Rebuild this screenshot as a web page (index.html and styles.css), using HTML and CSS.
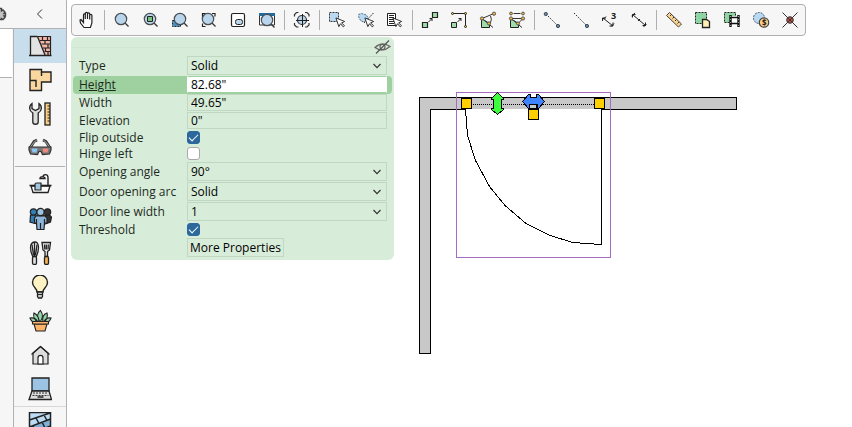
FILE: index.html
```html
<!DOCTYPE html>
<html lang="en">
<head>
<meta charset="utf-8">
<title>Floor plan editor</title>
<link rel="stylesheet" href="styles.css">
</head>
<body>
<svg class="defs" aria-hidden="true">
  <symbol id="lens" viewBox="0 0 21 20"><path d="M12.5 12.5l4 4" stroke="#333" stroke-width="1.300"/><circle cx="9" cy="9" r="5.700" fill="#b9d5ec" stroke="#4a4e52" stroke-width="1.200"/></symbol>
  <symbol id="cursor" viewBox="0 0 12 12"><path d="M1 1l3.2 9.5 1.8-3.2 3 3.5 1.4-1.3-3.2-3 3.3-1.6z" fill="#fff" stroke="#222" stroke-width="1"/></symbol>
  <symbol id="chev" viewBox="0 0 10 6"><path d="M1.5 1l3.5 3.6L8.500 1" fill="none" stroke="#333" stroke-width="1.2"/></symbol>
</svg>
<div class="app">
  <aside class="side">
    <header class="side-head">
      <svg class="gear" width="8" height="16" viewBox="0 0 8 16"><path d="M-2 2.500h3.500v2.500l1.500-1 2 2-1 1.500h1.500v2.500h-1.500l1 1.500-2 2-1.500-1v1h-3.500z" fill="#c4c4c4" stroke="#444" stroke-width="1.400"/></svg>
      <button class="collapse" aria-label="Collapse"><svg width="8" height="12" viewBox="0 0 8 12"><path d="M6 1.500L1.500 6 6 10.500" fill="none" stroke="#333"/></svg></button>
    </header>
    <div class="side-body">
      <div class="gutter"><div class="list"></div></div>
      <nav class="cats">
        <button class="cat on" aria-label="Walls"><svg viewBox="0 0 24 24"><path d="M2 2h8l7 19H2z" fill="#e3e3e3"/><path d="M10 2h13v19h-6z" fill="#f3b4a6"/><path d="M9.500 2.500h13v18.500M12 6.500h11M13.500 10h9M15 14h8M16.500 17.500h6M14.500 3v3.500M19.500 3v3.500M17 6.500V10M20 10v4M17.500 14v3.500M20 17.500V21" fill="none" stroke="#222" stroke-width="1.200"/><path d="M9.500 2.500L17 21" stroke="#222" stroke-width="1.300"/><path d="M2.500 21V2.500h7M1 21.500h22.500" fill="none" stroke="#222" stroke-width="1.300"/></svg></button>
        <button class="cat" aria-label="Rooms"><svg viewBox="0 0 24 24"><path d="M2 1.500h11.500v2.500H23v10h-9.500v8.500H2z" fill="#fbd7a0" stroke="#222" stroke-width="1.400"/><path d="M2 12.500h6v6.500M13.500 4v4" fill="none" stroke="#222" stroke-width="1.400"/></svg></button>
        <button class="cat" aria-label="Tools"><svg viewBox="0 0 24 24"><path d="M4 1.500v5l3.500 2 3.500-2v-5c3.500 2.500 3 7.500-.8 9.500v9c0 3-5.400 3-5.400 0v-9C1 9 .5 4 4 1.500z" fill="#ddd" stroke="#222" stroke-width="1.300"/><rect x="17" y="1" width="5" height="22" fill="#fbd083" stroke="#222" stroke-width="1.300"/><path d="M19.500 4H22M19.500 7H22M19.500 10H22M19.500 13H22M19.500 16H22M19.500 19H22" stroke="#222"/></svg></button>
        <button class="cat" aria-label="3D view"><svg viewBox="0 0 24 24"><path d="M2 12L6 5.500l3-1.500M22 12l-4-6.500L15 4" fill="none" stroke="#333" stroke-width="2.800"/><path d="M2.500 11L6.500 5.500l2-1M21.500 11l-4-5.500-2-1" fill="none" stroke="#aaa"/><path d="M1 11h22v3l-1.500 4-7 .5-1.500-3h-2l-1.500 3-7-.5L1 14z" fill="#777" stroke="#333" stroke-width="1.200"/><path d="M3.500 12.500h6l-1 4h-4z" fill="#8fc5f2"/><path d="M14.500 12.500h6l-1 4h-4z" fill="#f08b80"/></svg></button>
        <hr class="rule">
        <button class="cat" aria-label="Bathroom"><svg viewBox="0 0 24 24"><path d="M20 12V4.500c0-4-5-3.500-5-.5M12 5.500c0-2.500 5-2.500 5 0z" fill="none" stroke="#222" stroke-width="1.400"/><path d="M3 13h19l-2 6.500H5z" fill="#fff" stroke="#222" stroke-width="1.300"/><path d="M1.500 12.500h22" stroke="#222" stroke-width="1.600"/><path d="M7 17v-5.500q0-1.500 1.500-1.500H13v7z" fill="#9fc8e0" stroke="#222" stroke-width="1.200"/></svg></button>
        <button class="cat" aria-label="People"><svg viewBox="0 0 24 24"><g stroke="#222" stroke-width="1.200"><path d="M2.500 8H10v9l-5-1-3-1z" fill="#2f7fb5"/><path d="M14 8h7.500l2 2-1 5-5 2H14z" fill="#333"/><circle cx="5.500" cy="5" r="3.200" fill="#2f7fb5"/><circle cx="19.500" cy="5" r="3.200" fill="#333"/><path d="M8 9h9l2 2v5h-2.500l-.5 6.500H9L8.500 16H6.500v-5z" fill="#8db5da"/><path d="M12.500 16v6M8.500 12v4M16.500 12v4"/><circle cx="12.500" cy="5" r="3.600" fill="#9cc3e4"/></g></svg></button>
        <button class="cat" aria-label="Kitchen"><svg viewBox="0 0 24 24"><g stroke="#222" stroke-width="1.300"><path d="M5 16C1.500 9 1.500 1.500 6.500 1S11.500 9 8 16z" fill="#eee"/><path d="M6.500 1v14M4 3.500l1.500 11M9 3.500l-1.500 11" fill="none"/><rect x="4.500" y="15.500" width="4" height="8" rx="1.500" fill="#ddd"/><path d="M14 1.500h8.500L21.500 9l-2 1.500v5h-2.500v-5L15 9z" fill="#eee"/><path d="M16.500 3.500l.3 5M18.300 3.500v5M20.300 3.500l-.3 5"/><rect x="16.500" y="15.500" width="4" height="8" rx="1.500" fill="#f9b150"/></g></svg></button>
        <button class="cat" aria-label="Lighting"><svg viewBox="0 0 24 24"><path d="M9 17c0-4-4.500-4.500-4.500-9.500a7.500 7.500 0 0 1 15 0c0 5-4.500 5.500-4.500 9.500z" fill="#fdf3c2" stroke="#222" stroke-width="1.400"/><path d="M9.500 17h5v4.500l-1 1.500h-3l-1-1.500z" fill="#ccc" stroke="#222" stroke-width="1.300"/><path d="M9 19.500h6" stroke="#222"/></svg></button>
        <button class="cat" aria-label="Plants"><svg viewBox="0 0 24 24"><g fill="#94d6ab" stroke="#222" stroke-width="1.100"><path d="M12 13C8 9 9 4 12.500 1.500 15 5 15.500 9 12 13z"/><path d="M10 13C6 11 5 7 6 4c3 1.500 5 4 5 9zM15 13c-1-5 1-8 4-9 1 3 0 7-3 9zM9 13c-4 1-6-1-7-4 3-.5 6 .5 8 4zM16 13c1-3 4-4.500 7-4-1 3-3.500 5-7 4z"/><path d="M6 15h13l-2 7H8z" fill="#fdb468"/><path d="M4.500 12.500h16V15h-16z" fill="#fdb468"/></g></svg></button>
        <button class="cat" aria-label="Exterior"><svg viewBox="0 0 24 24"><path d="M5 10v11h15V10l-7.500-6.500z" fill="#ddd" stroke="#222" stroke-width="1.200"/><path d="M3.500 11.500l9-8 9 8" fill="none" stroke="#222" stroke-width="1.200"/><path d="M10 21v-6c0-3.500 5-3.500 5 0v6z" fill="#fff" stroke="#222" stroke-width="1.200"/></svg></button>
        <button class="cat" aria-label="Electronics"><svg viewBox="0 0 24 24"><path d="M4 1h17v13H4z" fill="#9cc3e4" stroke="#222" stroke-width="1.300"/><path d="M4 14h17l2.500 8.500H1z" fill="#ddd" stroke="#222" stroke-width="1.300"/><path d="M5 16h15M4.500 18.500h16" stroke="#333" stroke-dasharray="2 1"/><path d="M9.500 20h6" stroke="#222" stroke-width="1.500"/></svg></button>
        <hr class="thin">
        <button class="cat" aria-label="Materials"><svg viewBox="0 0 24 24"><path d="M1.500 0h21v24h-21z" fill="#bcdcf3"/><path d="M1.500 15l21-8v7l-21 8z" fill="#7fb0d6"/><path d="M1.500 24V.500h21V24M1.500 8L22 1M1.500 15l21-8M1.500 22l21-8M9 24l14-5M8 6l3 5.500M16 3l3 5.500M5 14l3 5.500M14 10l3 6M12 18l3 4" fill="none" stroke="#222" stroke-width="1.500"/></svg></button>
      </nav>
    </div>
  </aside>
  <main class="main">
    <svg class="plan" width="785" height="427" viewBox="67 0 785 427" role="img" aria-label="Floor plan" shape-rendering="crispEdges">
      <path d="M419.500 97.500h317v12h-306v244h-11z" fill="#c8c8c8" stroke="#000"/>
      <path d="M465.500 109.500l2 26 8 25 14 26 15.500 19 21 18 24 12 23 7 28 2V109" fill="#fff" stroke="#000"/>
      <path d="M473 104.500h121" stroke="#000" stroke-dasharray="1 1"/>
      <rect x="456.500" y="92.500" width="154" height="165" fill="none" stroke="#a56cc1"/>
      <g fill="#ffd000" stroke="#000"><path d="M461.500 98.500h10v10h-10zM594.500 98.500h10v10h-10zM528.500 109.500h10v10h-10z"/></g>
      <path d="M497.500 92.500l6 6v1h-2v9h2v1l-6 5-6-5v-1h2v-9h-2v-1z" fill="#3dff3d" stroke="#000"/>
      <path d="M522.500 101.500l6-7h2v3h6v-3h2l6 7-6 7h-1v-4h-8v4h-1z" fill="#3e83ff" stroke="#000"/>
      <path d="M529.500 104.500h7v4h-7z" fill="#c8c8c8" stroke="#000"/>
    </svg>
    <div class="toolbar" role="toolbar" aria-label="View and edit">
      <button aria-label="Pan"><svg><path d="M7 17.500L3.500 13l-.5-3 1-.5 2.500 3V5c0-1.500 1.800-1.500 1.800 0V9 3.500c0-1.500 2.200-1.500 2.200 0V9 4c0-1.500 2.200-1.500 2.200 0v5.500V5.500c0-1.500 2.200-1.500 2.200 0V13l-1.500 4.500z" fill="#fff" stroke="#222" stroke-width="1.200"/></svg></button>
      <i></i>
      <button aria-label="Zoom"><svg><use href="#lens"/></svg></button>
      <button aria-label="Zoom to object"><svg><use href="#lens"/><path d="M6.500 6.500h5v5h-5z" fill="#78c47d" stroke="#222"/></svg></button>
      <button aria-label="Zoom to selection"><svg><path d="M2.500 10.500h8v6h-8z" fill="#4c8fc0" stroke="#222" stroke-dasharray="2 1"/><use href="#lens" x="1"/></svg></button>
      <button aria-label="Zoom to fit"><svg><use href="#lens"/><path d="M3.500 6.500v-3h3M13 3.500h3v3M3.500 13.500v3h3" fill="none" stroke="#222" stroke-width="1.200"/></svg></button>
      <button aria-label="Overview"><svg><rect x="3.500" y="3.500" width="13" height="13" rx="1.500" fill="#fff" stroke="#222" stroke-width="1.200"/><rect x="7.500" y="9.500" width="7" height="5" rx="2" fill="#b9d5ec" stroke="#222"/></svg></button>
      <button aria-label="Zoom window"><svg><path d="M2.500 4v11h15V4z" fill="#fff" stroke="#333"/><path d="M2 3h16v3H2z" fill="#246b9d"/><use href="#lens" x="1" y="1"/></svg></button>
      <i></i>
      <button aria-label="Center"><svg><path d="M2.500 6.500v-2l2-2h2M13 2.500h2l2 2v2M2.500 13v2l2 2h2M13 17h2l2-2v-2" fill="none" stroke="#333" stroke-width="1.200"/><circle cx="10" cy="10" r="4.500" fill="#b9d5ec" stroke="#333" stroke-width="1.200"/><path d="M10.500 4v13M4 10.500h13" stroke="#222"/></svg></button>
      <i></i>
      <button aria-label="Select area"><svg><path d="M2.500 2.500h9v9h-9z" fill="#b9d9f2" stroke="#333" stroke-dasharray="2 1"/><use href="#cursor" x="8" y="7" width="11" height="11"/></svg></button>
      <button aria-label="Select along line"><svg><path d="M2.500 4.500l3-1 5 1.500 1.500 3-4 4-3-1-2-3z" fill="#b9d9f2" stroke="#58738a" stroke-dasharray="2 1"/><path d="M17.500 3L8 13" stroke="#333" stroke-dasharray="2 1"/><use href="#cursor" x="8" y="7" width="11" height="11"/></svg></button>
      <button aria-label="Select from list"><svg><path d="M2.500 3.500h8v12h-8z" fill="#fff" stroke="#222"/><path d="M4 5.500h5M4 7.500h5M4 9.500h5M4 11.500h5M4 13.500h5" stroke="#222"/><use href="#cursor" x="7" y="7" width="11" height="11"/></svg></button>
      <i></i>
      <button aria-label="Move to point"><svg><g fill="#9fdcab" stroke="#222" stroke-width="1.200"><path d="M2.500 12.500h5v5h-5zM12.500 2.500h5v5h-5z"/></g><path d="M8.500 12L12 8.500M9.500 8.500H12V11" fill="none" stroke="#222"/></svg></button>
      <button aria-label="Move to wall"><svg><path d="M2.500 12.500h5v5h-5z" fill="#9fdcab" stroke="#222"/><path d="M3.500 3.500h13v13M8.500 12L12 8.500M9.500 8.500H12V11" fill="none" stroke="#222"/><g fill="#f0cf58" stroke="#222"><circle cx="3.500" cy="3.500" r="1"/><circle cx="16.500" cy="3.500" r="1"/><circle cx="16.500" cy="16.500" r="1"/></g></svg></button>
      <button aria-label="Align to angle"><svg><path d="M3.500 8.500v9h8v-4z" fill="#9fdcab" stroke="#222"/><path d="M4 8.500l12-5M4 8.500l11 9M12.500 6q2 3-.5 8" fill="none" stroke="#333"/><g fill="#f0b93e" stroke="#555"><circle cx="4" cy="8.500" r="1.600"/><circle cx="16" cy="3.700" r="1.600"/><circle cx="11" cy="13.500" r="1.600"/></g></svg></button>
      <button aria-label="Align to parallel"><svg><path d="M3.500 8.500v9h8v-4z" fill="#9fdcab" stroke="#222"/><path d="M4 8.500h12M4 8.500l11 9M16 8.500l-5 5M6.500 3.500h7" fill="none" stroke="#333"/><g fill="#f0b93e" stroke="#555"><circle cx="4" cy="8.500" r="1.600"/><circle cx="16" cy="8.500" r="1.600"/><circle cx="4" cy="3.500" r="1.400"/><circle cx="16" cy="3.500" r="1.400"/><circle cx="11" cy="13.500" r="1.600"/></g></svg></button>
      <i></i>
      <button aria-label="Line between points"><svg><path d="M4 4l12 12" stroke="#222" stroke-dasharray="1.500 1.500"/><g fill="#5b93c4" stroke="#444"><circle cx="3.800" cy="4" r="1.600"/><circle cx="16" cy="16" r="1.600"/></g></svg></button>
      <button aria-label="Line to point"><svg><path d="M3 3l12 12" stroke="#222" stroke-dasharray="1.500 1.500"/><circle cx="16" cy="16" r="1.600" fill="#5b93c4" stroke="#444"/></svg></button>
      <button aria-label="Divide dimension"><svg><path d="M3 8l10 8M2.500 11V8H6M13 12.500V16H9.500M6 6.500l-3 3M14 13.500l-3 3" fill="none" stroke="#222"/><text x="11" y="9">3</text></svg></button>
      <button aria-label="Dimension"><svg><path d="M3.500 4.500l13 11M3.500 7.500v-3h3M16.500 12.500v3h-3M6 3L2.500 6M17.500 14l-3 3M11 9l-2 2" fill="none" stroke="#222"/></svg></button>
      <i></i>
      <button aria-label="Measure"><svg><path d="M2.500 5.500l3-3 12 11.500-3 3z" fill="#fbd38c" stroke="#444"/><path d="M7.500 4.500L6 6M10 7L8.500 8.500M12.500 9.500L11 11M15 12l-1.500 1.500" stroke="#333"/></svg></button>
      <button aria-label="Copy selection"><svg><path d="M2.500 2.500h11v11h-11z" fill="#8fd5a3" stroke="#222" stroke-dasharray="2 1"/><path d="M9.500 9.500h4l3 2v6h-7z" fill="#fdf0b4" stroke="#222" stroke-width="1.300"/></svg></button>
      <button aria-label="Animate selection"><svg><path d="M2.500 2.500h11v10h-11z" fill="#8fd5a3" stroke="#222" stroke-dasharray="2 1"/><path d="M8 6h9v11H8z" fill="#fff"/><path d="M8.500 5v12M16.500 5v12" stroke="#111" stroke-width="2.400"/><path d="M8 7.500h9M8 13.500h9" stroke="#111" stroke-width="1.300"/><path d="M8.500 6v11M16.500 6v11" stroke="#999" stroke-dasharray="1 2"/></svg></button>
      <button aria-label="Cost"><svg><circle cx="8" cy="8" r="5.500" fill="#b9d9f2" stroke="#42576a" stroke-dasharray="2 1"/><circle cx="13" cy="12.500" r="4.700" fill="#fbcf84" stroke="#444" stroke-width="1.200"/><text class="cost" x="11" y="16">$</text></svg></button>
      <button aria-label="Intersection"><svg><circle cx="10" cy="10" r="3.300" fill="#c44f42" stroke="#333"/><path d="M2.500 2.500l15 15M17.500 2.500l-15 15" stroke="#333"/></svg></button>
    </div>
    <form class="panel">
      <div class="panel-head"><button type="button" class="eye" aria-label="Hide"><svg width="17" height="14" viewBox="0 0 17 14"><path d="M1 7.500Q8 1 16 6.500 8.500 13 1 7.500z" fill="none" stroke="#666" stroke-width="1.300"/><circle cx="8.500" cy="7" r="2.500" fill="none" stroke="#666" stroke-width="1.200"/><path d="M2 13.500L15 .5" stroke="#555" stroke-width="1.300"/></svg></button></div>
      <div class="row tall"><label for="type">Type</label><div class="pick"><select id="type"><option>Solid</option></select><svg><use href="#chev"/></svg></div></div>
      <div class="row mid active"><label for="height">Height</label><input type="text" id="height" value="82.68&quot;"></div>
      <div class="row mid"><label for="width">Width</label><input type="text" id="width" value="49.65&quot;"></div>
      <div class="row mid"><label for="elev">Elevation</label><input type="text" id="elev" value="0&quot;"></div>
      <div class="row"><label for="flip">Flip outside</label><input type="checkbox" id="flip" checked></div>
      <div class="row"><label for="hinge">Hinge left</label><input type="checkbox" id="hinge"></div>
      <div class="row tall"><label for="angle">Opening angle</label><div class="pick"><select id="angle"><option>90°</option></select><svg><use href="#chev"/></svg></div></div>
      <div class="row tall"><label for="arc">Door opening arc</label><div class="pick"><select id="arc"><option>Solid</option></select><svg><use href="#chev"/></svg></div></div>
      <div class="row tall"><label for="line">Door line width</label><div class="pick"><select id="line"><option>1</option></select><svg><use href="#chev"/></svg></div></div>
      <div class="row"><label for="thr">Threshold</label><input type="checkbox" id="thr" checked></div>
      <div class="row tall"><span></span><button type="button" class="more">More Properties</button></div>
    </form>
  </main>
</div>
</body>
</html>
```
FILE: styles.css
```css
* { box-sizing: border-box; }
body { margin: 0; background: #fff; color: #1c2a1e; font: 12px/16px "Open Sans", "Noto Sans", sans-serif; overflow: hidden; }
button { margin: 0; padding: 0; border: 0; background: none; font: inherit; color: inherit; }
.defs { position: absolute; width: 0; height: 0; }
.app { display: flex; height: 100vh; }

.side { flex: none; width: 67px; display: flex; flex-direction: column; background: #f6f6f6; border-right: 1px solid #b2b0b2; overflow: hidden; }
.side-head { flex: none; height: 29px; display: flex; align-items: center; border-bottom: 1px solid #b2b0b2; }
.collapse { flex: 1; margin-left: 6px; display: flex; justify-content: center; }
.side-body { flex: 1; display: flex; min-height: 0; }
.gutter { width: 13px; }
.list { height: 49px; margin-right: 1px; background: #fff; border-bottom: 1px solid #b2b0b2; }
.cats { flex: 1; display: flex; flex-direction: column; border-left: 1px solid #b2b0b2; }
.cat { flex: none; height: 34px; display: flex; align-items: center; justify-content: center; }
.cat.on { background: #c9deed; }
.cat svg { width: 24px; height: 24px; }
.rule { flex: none; width: calc(100% - 2px); height: 1px; margin: 1px; border: 0; background: #b2b0b2; }
.thin { flex: none; width: 100%; height: 1px; margin: 0; border: 0; background: #d8d8d8; }

.main { flex: 1; min-width: 0; position: relative; padding: 4px; display: flex; flex-direction: column; align-items: flex-start; gap: 1px; }
.plan { position: absolute; left: 0; top: 0; }
.toolbar { position: relative; display: flex; height: 32px; padding-left: 1px; background: #f6f6f6; border: 1px solid #b0aeb0; border-radius: 4px; }
.toolbar button { width: 29px; display: flex; align-items: center; justify-content: center; }
.toolbar svg { width: 21px; height: 20px; fill: none; }
.toolbar use[href="#lens"] { width: 21px; height: 20px; }
.toolbar i { width: 1px; margin: 5px 3px 5px 2px; background: #b0aeb0; }
.toolbar text { font: bold 9px "Open Sans", sans-serif; fill: #222; }
.toolbar .cost { font-size: 8px; }

.panel { position: relative; width: 323px; padding: 0 2px 2px; background: #d8edd9; border-radius: 6px; }
.panel-head { height: 19px; padding: 3px 1px 0; display: flex; justify-content: flex-end; align-items: flex-start; background: linear-gradient(#d3e4d5, #d3e4d5) 0 10px / calc(100% - 20px) 1px no-repeat; }
.eye { display: flex; }
.row { display: flex; align-items: center; height: 16px; padding: 0 5px 0 6px; border-radius: 4px; }
.row.mid { height: 18px; }
.row.tall { height: 20px; align-items: flex-start; }
.row > label, .row > span { flex: none; width: 108px; }
.row.tall > label { line-height: 20px; }
.row.active { background: #9fd1a0; }
.row.active label { text-decoration: underline; }
.row input[type="text"], .pick { flex: 1; min-width: 0; border: 1px solid #c0d8c2; background: transparent; color: #000; }
.row input[type="text"] { height: 17px; margin: 0; padding: 0 3px; border-radius: 0; font: inherit; outline: 0; align-self: flex-start; }
.row.active input[type="text"] { background: #fff; border-color: #9fd1a0 #fff; }
.pick { position: relative; display: flex; height: 19px; }
.pick select { flex: 1; appearance: none; margin: 0; padding: 0 3px; border: 0; background: transparent; color: #000; font: inherit; }
.pick svg { position: absolute; right: 4px; top: 6px; width: 10px; height: 6px; pointer-events: none; }
.row input[type="checkbox"] { appearance: none; width: 13px; height: 13px; margin: 0 0 1px; display: grid; place-items: center; background: #fff; border: 1px solid #aaa; border-radius: 3px; }
.row input:checked { background: #2c689c; border-color: #2c689c; }
.row input:checked::after { content: ""; width: 4px; height: 8px; margin-bottom: 2px; border: solid #fff; border-width: 0 1px 1px 0; transform: rotate(45deg); }
.more { height: 19px; padding: 0 2px; border: 1px solid #c0d8c2; color: #000; line-height: 17px; }
```
